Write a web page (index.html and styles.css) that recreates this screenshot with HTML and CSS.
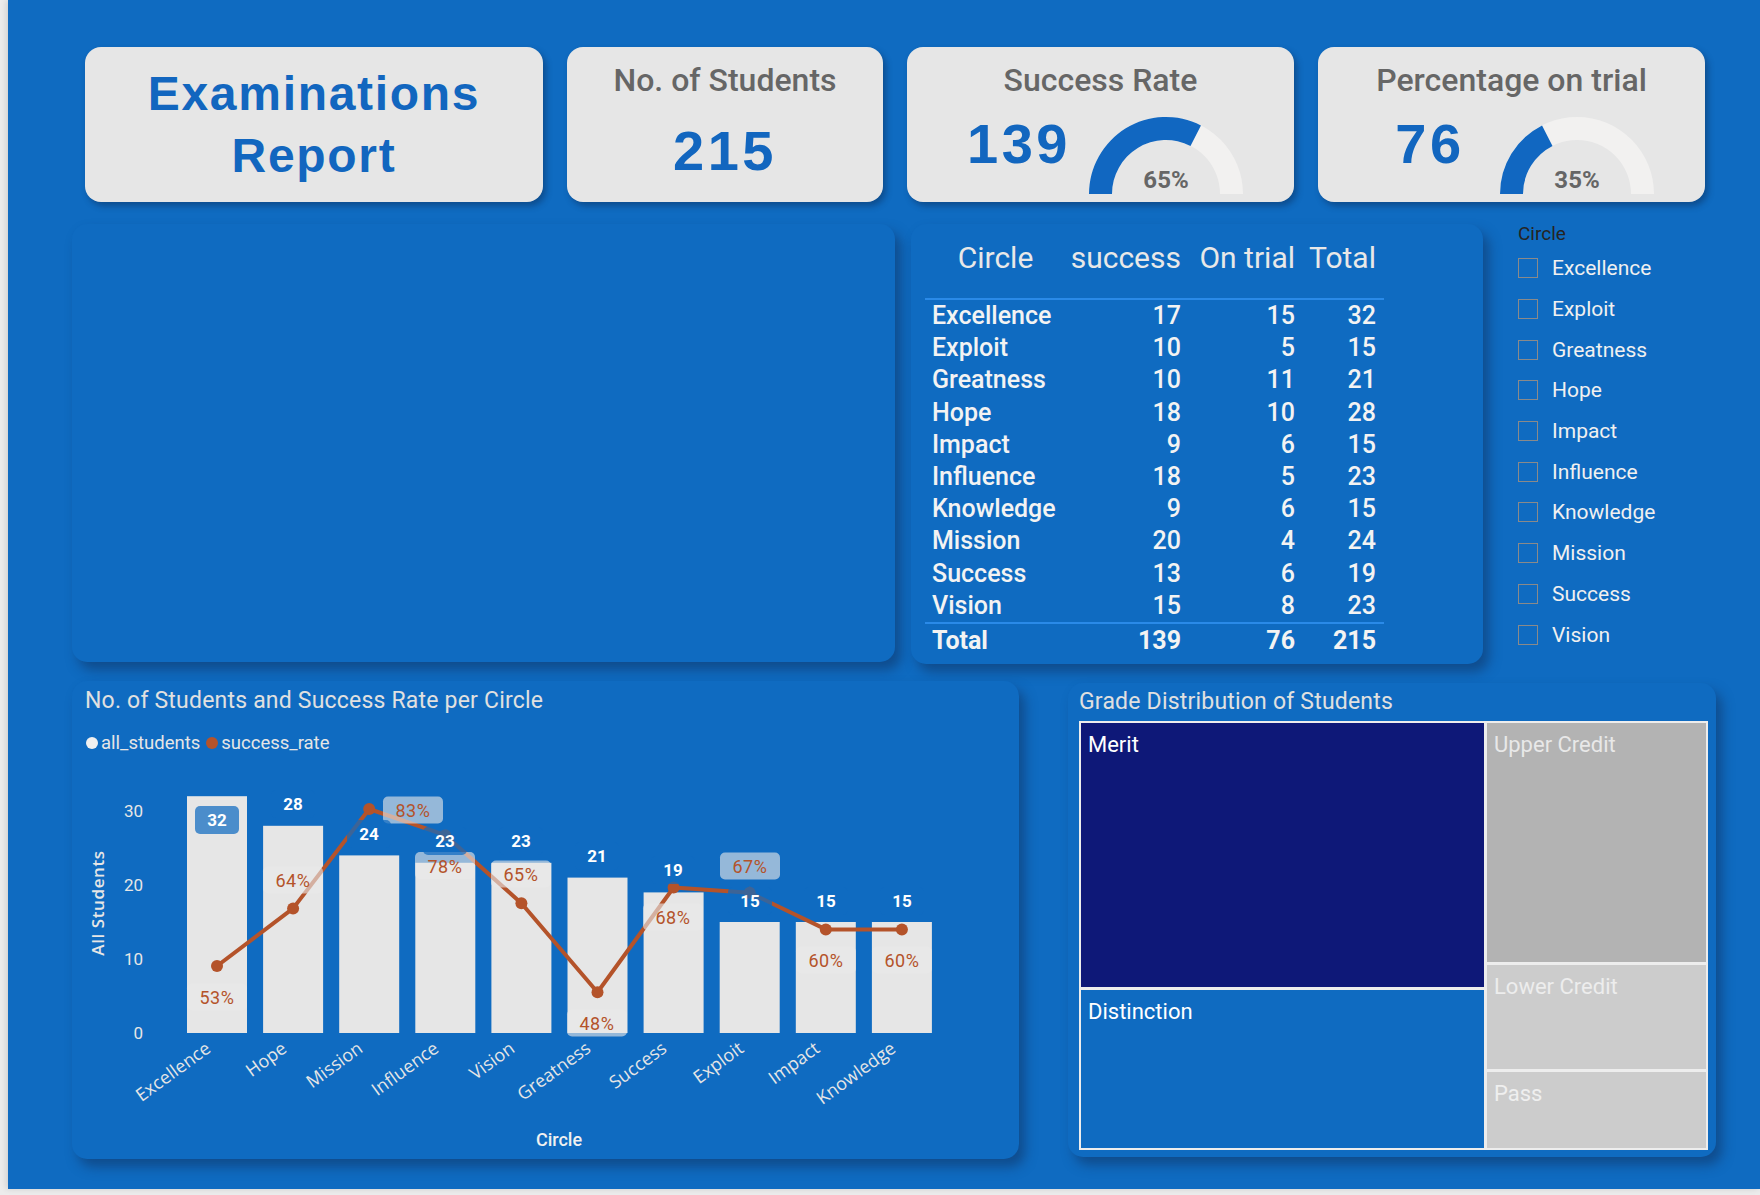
FILE: index.html
```html
<!DOCTYPE html>
<html>
<head>
<meta charset="utf-8">
<link rel="stylesheet" href="styles.css">
</head>
<body>
<div class="canvas">
  <div class="kpis">
    <div class="card title-card">
      <div class="report-title">Examinations<br>Report</div>
    </div>
    <div class="card stat-card">
      <div class="card-label">No. of Students</div>
      <div class="big-value students-value">215</div>
    </div>
    <div class="card stat-card">
      <div class="card-label">Success Rate</div>
      <div class="gauge-row">
        <div class="big-value gauge-value">139</div>
        <div class="gauge">
          <svg width="154" height="77" viewBox="0 0 154 77">
            <path d="M0 77 A77 77 0 0 1 154 77 L131 77 A54 54 0 0 0 23 77 Z" fill="#F2F1F0"/>
            <path d="M0 77 A77 77 0 0 1 111.96 8.4 L101.5 28.9 A54 54 0 0 0 23 77 Z" fill="#1167C1"/>
          </svg>
          <div class="gauge-pct">65%</div>
        </div>
      </div>
    </div>
    <div class="card stat-card">
      <div class="card-label">Percentage on trial</div>
      <div class="gauge-row">
        <div class="big-value gauge-value">76</div>
        <div class="gauge">
          <svg width="154" height="77" viewBox="0 0 154 77">
            <path d="M0 77 A77 77 0 0 1 154 77 L131 77 A54 54 0 0 0 23 77 Z" fill="#F2F1F0"/>
            <path d="M0 77 A77 77 0 0 1 42.04 8.4 L52.5 28.9 A54 54 0 0 0 23 77 Z" fill="#1167C1"/>
          </svg>
          <div class="gauge-pct">35%</div>
        </div>
      </div>
    </div>
  </div>

  <div class="mid">
    <div class="panel empty-panel"></div>
    <div class="panel table-panel">
      <table class="circle-table">
        <thead>
          <tr><th class="c-name">Circle</th><th>success</th><th>On trial</th><th class="c-total">Total</th></tr>
        </thead>
        <tbody>
          <tr><td class="c-name">Excellence</td><td>17</td><td>15</td><td class="c-total">32</td></tr>
          <tr><td class="c-name">Exploit</td><td>10</td><td>5</td><td class="c-total">15</td></tr>
          <tr><td class="c-name">Greatness</td><td>10</td><td>11</td><td class="c-total">21</td></tr>
          <tr><td class="c-name">Hope</td><td>18</td><td>10</td><td class="c-total">28</td></tr>
          <tr><td class="c-name">Impact</td><td>9</td><td>6</td><td class="c-total">15</td></tr>
          <tr><td class="c-name">Influence</td><td>18</td><td>5</td><td class="c-total">23</td></tr>
          <tr><td class="c-name">Knowledge</td><td>9</td><td>6</td><td class="c-total">15</td></tr>
          <tr><td class="c-name">Mission</td><td>20</td><td>4</td><td class="c-total">24</td></tr>
          <tr><td class="c-name">Success</td><td>13</td><td>6</td><td class="c-total">19</td></tr>
          <tr><td class="c-name">Vision</td><td>15</td><td>8</td><td class="c-total">23</td></tr>
        </tbody>
        <tfoot>
          <tr><td class="c-name">Total</td><td>139</td><td>76</td><td class="c-total">215</td></tr>
        </tfoot>
      </table>
    </div>
    <div class="slicer">
      <div class="slicer-title">Circle</div>
      <div class="slicer-item"><span class="box"></span>Excellence</div>
      <div class="slicer-item"><span class="box"></span>Exploit</div>
      <div class="slicer-item"><span class="box"></span>Greatness</div>
      <div class="slicer-item"><span class="box"></span>Hope</div>
      <div class="slicer-item"><span class="box"></span>Impact</div>
      <div class="slicer-item"><span class="box"></span>Influence</div>
      <div class="slicer-item"><span class="box"></span>Knowledge</div>
      <div class="slicer-item"><span class="box"></span>Mission</div>
      <div class="slicer-item"><span class="box"></span>Success</div>
      <div class="slicer-item"><span class="box"></span>Vision</div>
    </div>
  </div>

  <div class="bottom">
    <div class="panel chart-panel">
      <div class="visual-title">No. of Students and Success Rate per Circle</div>
      <div class="legend">
        <span class="legend-item"><span class="dot dot-white"></span>all_students</span>
        <span class="legend-item"><span class="dot dot-rust"></span>success_rate</span>
      </div>
      <svg class="combo" width="947" height="399" viewBox="0 0 947 399">
        <g class="ticks">
          <text x="71" y="51">30</text>
          <text x="71" y="125">20</text>
          <text x="71" y="199">10</text>
          <text x="71" y="273">0</text>
        </g>
        <text class="y-title" transform="translate(25 143) rotate(-90)">All Students</text>
        <g fill="#E6E6E6">
          <rect x="115" y="36.2" width="60" height="236.8"/>
          <rect x="191.1" y="65.8" width="60" height="207.2"/>
          <rect x="267.2" y="95.4" width="60" height="177.6"/>
          <rect x="343.3" y="102.8" width="60" height="170.2"/>
          <rect x="419.4" y="102.8" width="60" height="170.2"/>
          <rect x="495.5" y="117.6" width="60" height="155.4"/>
          <rect x="571.6" y="132.4" width="60" height="140.6"/>
          <rect x="647.7" y="162" width="60" height="111"/>
          <rect x="723.8" y="162" width="60" height="111"/>
          <rect x="799.9" y="162" width="60" height="111"/>
        </g>
        <polyline points="145,206 221.1,148.4 297.2,49 373.3,75.2 449.4,143.2 525.5,232.2 601.6,127.5 677.7,132.7 753.8,169.4 829.9,169.4" fill="none" stroke="#B4532A" stroke-width="4" stroke-linejoin="round"/>
        <g fill="#B4532A">
          <circle cx="145" cy="206" r="6"/>
          <circle cx="221.1" cy="148.4" r="6"/>
          <circle cx="297.2" cy="49" r="6"/>
          <circle cx="373.3" cy="75.2" r="6"/>
          <circle cx="449.4" cy="143.2" r="6"/>
          <circle cx="525.5" cy="232.2" r="6"/>
          <circle cx="601.6" cy="127.5" r="6"/>
          <circle cx="677.7" cy="132.7" r="6"/>
          <circle cx="753.8" cy="169.4" r="6"/>
          <circle cx="829.9" cy="169.4" r="6"/>
        </g>
        <g class="pct-boxes" fill="rgba(232,232,232,0.62)">
          <rect x="115" y="223.5" width="60" height="27" rx="5"/>
          <rect x="191" y="106.5" width="60" height="27" rx="5"/>
          <rect x="311" y="36.5" width="60" height="27" rx="5"/>
          <rect x="343" y="92" width="60" height="27" rx="5"/>
          <rect x="419" y="100.5" width="60" height="27" rx="5"/>
          <rect x="495" y="249.5" width="60" height="27" rx="5"/>
          <rect x="571" y="143.5" width="60" height="27" rx="5"/>
          <rect x="648" y="92.5" width="60" height="27" rx="5"/>
          <rect x="724" y="186.5" width="60" height="27" rx="5"/>
          <rect x="800" y="186.5" width="60" height="27" rx="5"/>
        </g>
        <g class="pct">
          <text x="145" y="237">53%</text>
          <text x="221" y="120">64%</text>
          <text x="341" y="50">83%</text>
          <text x="373" y="106">78%</text>
          <text x="449" y="114">65%</text>
          <text x="525" y="263">48%</text>
          <text x="601" y="157">68%</text>
          <text x="678" y="106">67%</text>
          <text x="754" y="200">60%</text>
          <text x="830" y="200">60%</text>
        </g>
        <g fill="rgba(15,107,193,0.72)">
          <rect x="123" y="46" width="44" height="28" rx="5"/>
          <rect x="199" y="30" width="44" height="28" rx="5"/>
          <rect x="275" y="60" width="44" height="28" rx="5"/>
          <rect x="351" y="67" width="44" height="28" rx="5"/>
          <rect x="427" y="67" width="44" height="28" rx="5"/>
          <rect x="503" y="82" width="44" height="28" rx="5"/>
          <rect x="579" y="96" width="44" height="28" rx="5"/>
          <rect x="656" y="127" width="44" height="28" rx="5"/>
          <rect x="732" y="127" width="44" height="28" rx="5"/>
          <rect x="808" y="127" width="44" height="28" rx="5"/>
        </g>
        <g class="vals">
          <text x="145" y="60">32</text>
          <text x="221" y="44">28</text>
          <text x="297" y="74">24</text>
          <text x="373" y="81">23</text>
          <text x="449" y="81">23</text>
          <text x="525" y="96">21</text>
          <text x="601" y="110">19</text>
          <text x="678" y="141">15</text>
          <text x="754" y="141">15</text>
          <text x="830" y="141">15</text>
        </g>
        <g class="xlabels">
          <text transform="translate(140 291) rotate(-36)">Excellence</text>
          <text transform="translate(216 291) rotate(-36)">Hope</text>
          <text transform="translate(292 291) rotate(-36)">Mission</text>
          <text transform="translate(368 291) rotate(-36)">Influence</text>
          <text transform="translate(444 291) rotate(-36)">Vision</text>
          <text transform="translate(520 291) rotate(-36)">Greatness</text>
          <text transform="translate(596 291) rotate(-36)">Success</text>
          <text transform="translate(673 291) rotate(-36)">Exploit</text>
          <text transform="translate(749 291) rotate(-36)">Impact</text>
          <text transform="translate(825 291) rotate(-36)">Knowledge</text>
        </g>
        <text class="x-title" x="487" y="379">Circle</text>
      </svg>
    </div>
    <div class="panel tree-panel">
      <div class="visual-title">Grade Distribution of Students</div>
      <div class="treemap">
        <div class="tm-col">
          <div class="tm-cell merit" style="flex: 0 0 264px">Merit</div>
          <div class="tm-cell distinction" style="flex: 0 0 158px">Distinction</div>
        </div>
        <div class="tm-col">
          <div class="tm-cell upper" style="flex: 0 0 239px">Upper Credit</div>
          <div class="tm-cell lower" style="flex: 0 0 104px">Lower Credit</div>
          <div class="tm-cell pass" style="flex: 0 0 76px">Pass</div>
        </div>
      </div>
    </div>
  </div>
</div>
</body>
</html>
```

FILE: styles.css
```css
html, body {
  margin: 0;
  padding: 0;
}
body {
  background: #ececec;
  font-family: Roboto, "Liberation Sans", sans-serif;
  width: 1760px;
  height: 1195px;
  overflow: hidden;
}
.canvas {
  margin-left: 8px;
  width: 1752px;
  height: 1189px;
  background: #0F6BC1;
  box-sizing: border-box;
  padding: 47px 0 0 64px;
  box-shadow: -2px 0 6px rgba(0,0,0,0.12);
}

/* KPI row */
.kpis {
  display: grid;
  grid-template-columns: 458px 316px 387px 387px;
  column-gap: 24px;
  margin-left: 13px;
  height: 155px;
}
.card {
  background: #E6E6E6;
  border-radius: 16px;
  box-shadow: 3px 4px 6px rgba(10, 40, 80, 0.45);
  box-sizing: border-box;
}
.title-card {
  display: flex;
  align-items: center;
  justify-content: center;
}
.report-title {
  font-family: "Liberation Sans", Arial, sans-serif;
  font-weight: bold;
  font-size: 48px;
  line-height: 62px;
  letter-spacing: 1.7px;
  color: #1266BF;
  text-align: center;
}
.stat-card {
  display: flex;
  flex-direction: column;
  align-items: center;
  padding-top: 13px;
}
.card-label {
  font-family: Roboto, sans-serif;
  font-weight: 500;
  font-size: 32px;
  line-height: 40px;
  color: #666666;
}
.big-value {
  font-family: "Liberation Sans", Arial, sans-serif;
  font-weight: bold;
  font-size: 56px;
  color: #1266BF;
  letter-spacing: 3.5px;
}
.students-value {
  line-height: 64px;
  margin-top: 19px;
}
.gauge-row {
  display: flex;
  align-self: stretch;
  margin-top: 17px;
  height: 77px;
}
.gauge-value {
  width: 140px;
  margin-left: 42px;
  text-align: center;
  line-height: 53px;
  align-self: flex-start;
}
.gauge {
  position: relative;
  width: 154px;
  height: 77px;
  margin-left: 0;
}
.gauge svg {
  display: block;
}
.gauge-pct {
  position: absolute;
  left: 0;
  right: 0;
  bottom: 0;
  text-align: center;
  line-height: 28px;
  font-family: Roboto, sans-serif;
  font-weight: 700;
  font-size: 24px;
  color: #666666;
}

/* Panels */
.panel {
  background: #0F6BC1;
  border-radius: 15px;
  box-shadow: 6px 8px 12px rgba(16, 45, 90, 0.5);
  box-sizing: border-box;
}
.mid {
  display: flex;
  margin-top: 22px;
  height: 440px;
  align-items: flex-start;
}
.empty-panel {
  width: 823px;
  height: 438px;
}
.table-panel {
  width: 572px;
  height: 440px;
  margin-left: 16px;
  padding: 16px 0 0 14px;
}
.circle-table {
  border-collapse: collapse;
  width: 459px;
  table-layout: fixed;
  color: #F3F3F3;
  font-family: Roboto, sans-serif;
}
.circle-table th {
  font-weight: 400;
  font-size: 30px;
  line-height: 36px;
  height: 58px;
  box-sizing: border-box;
  padding: 0 5px 22px 0;
  vertical-align: top;
  text-align: right;
  color: #E8E8E8;
  border-bottom: 2px solid #2A8AE8;
  white-space: nowrap;
}
.circle-table th.c-name {
  text-align: center;
  width: 141px;
  padding: 0 0 22px 0;
}
.circle-table th:nth-child(2) { width: 120px; }
.circle-table th:nth-child(3) { width: 114px; }
.circle-table th.c-total { width: 84px; padding-right: 8px; }
.circle-table td {
  font-size: 25px;
  font-weight: 500;
  line-height: 32.2px;
  padding: 0 5px 0 0;
  text-align: right;
  white-space: nowrap;
}
.circle-table td.c-name {
  text-align: left;
  padding: 0 0 0 7px;
}
.circle-table td.c-total {
  padding-right: 8px;
}
.circle-table tfoot td {
  font-weight: 700;
  line-height: 34px;
  border-top: 2px solid #2A8AE8;
}

/* Slicer */
.slicer {
  margin-left: 35px;
  color: #F0F0F0;
  font-family: Roboto, sans-serif;
}
.slicer-title {
  font-size: 19px;
  line-height: 20px;
  color: #252423;
  margin-bottom: 4px;
}
.slicer-item {
  display: flex;
  align-items: center;
  height: 40.7px;
  font-size: 21px;
}
.slicer-item .box {
  width: 20px;
  height: 20px;
  box-sizing: border-box;
  border: 1.5px solid #8a8a8a;
  margin-right: 14px;
}

/* Bottom row */
.bottom {
  display: flex;
  margin-top: 17px;
  align-items: flex-start;
}
.chart-panel {
  width: 947px;
  height: 478px;
  padding: 6px 0 0 13px;
}
.visual-title {
  font-family: Roboto, sans-serif;
  font-size: 23px;
  line-height: 28px;
  letter-spacing: 0.2px;
  color: #E0E0E0;
}
.legend {
  display: flex;
  margin-top: 16px;
  line-height: 24px;
  font-size: 18.5px;
  color: #E6E6E6;
  gap: 5px;
}
.legend-item {
  display: flex;
  align-items: center;
}
.dot {
  width: 12px;
  height: 12px;
  border-radius: 50%;
  margin: 0 3px 0 1px;
}
.dot-white { background: #F0F0F0; }
.dot-rust { background: #B4532A; }
.combo {
  display: block;
  margin: 5px 0 0 -13px;
  font-family: Roboto, sans-serif;
}
.ticks text {
  font-size: 17px;
  fill: #E6E6E6;
  text-anchor: end;
  dominant-baseline: central;
}
.y-title {
  font-family: "Open Sans", sans-serif;
  font-weight: 600;
  font-size: 17px;
  fill: #E6E6E6;
  text-anchor: middle;
  dominant-baseline: central;
  letter-spacing: 0.6px;
}
.pct text {
  font-size: 18px;
  fill: #B4532A;
  text-anchor: middle;
  dominant-baseline: central;
  letter-spacing: 0.6px;
}
.vals text {
  font-size: 17px;
  font-weight: 700;
  fill: #FFFFFF;
  text-anchor: middle;
  dominant-baseline: central;
}
.xlabels text {
  font-family: "Open Sans", sans-serif;
  font-size: 18px;
  fill: #E6E6E6;
  text-anchor: end;
}
.x-title {
  font-size: 18px;
  font-weight: 500;
  fill: #F0F0F0;
  text-anchor: middle;
  dominant-baseline: central;
}

/* Treemap */
.tree-panel {
  width: 648px;
  height: 474px;
  margin: 2px 0 0 49px;
  padding: 5px 0 0 11px;
}
.treemap {
  margin-top: 5px;
  width: 629px;
  height: 429px;
  box-sizing: border-box;
  background: #EDEDED;
  padding: 2px;
  display: grid;
  grid-template-columns: 403px 1fr;
  column-gap: 3px;
}
.tm-col {
  display: flex;
  flex-direction: column;
  gap: 3px;
}
.tm-cell {
  box-sizing: border-box;
  font-family: Roboto, sans-serif;
  font-size: 22px;
  line-height: 28px;
  padding: 8px 7px;
  min-height: 0;
}
.merit { background: #0E1878; color: #FFFFFF; }
.distinction { background: #0F6BC1; color: #FFFFFF; }
.upper { background: #B3B3B3; color: #E8E8E8; }
.lower { background: #CCCCCC; color: #EDEDED; }
.pass { background: #CCCCCC; color: #EFEFEF; }
```
